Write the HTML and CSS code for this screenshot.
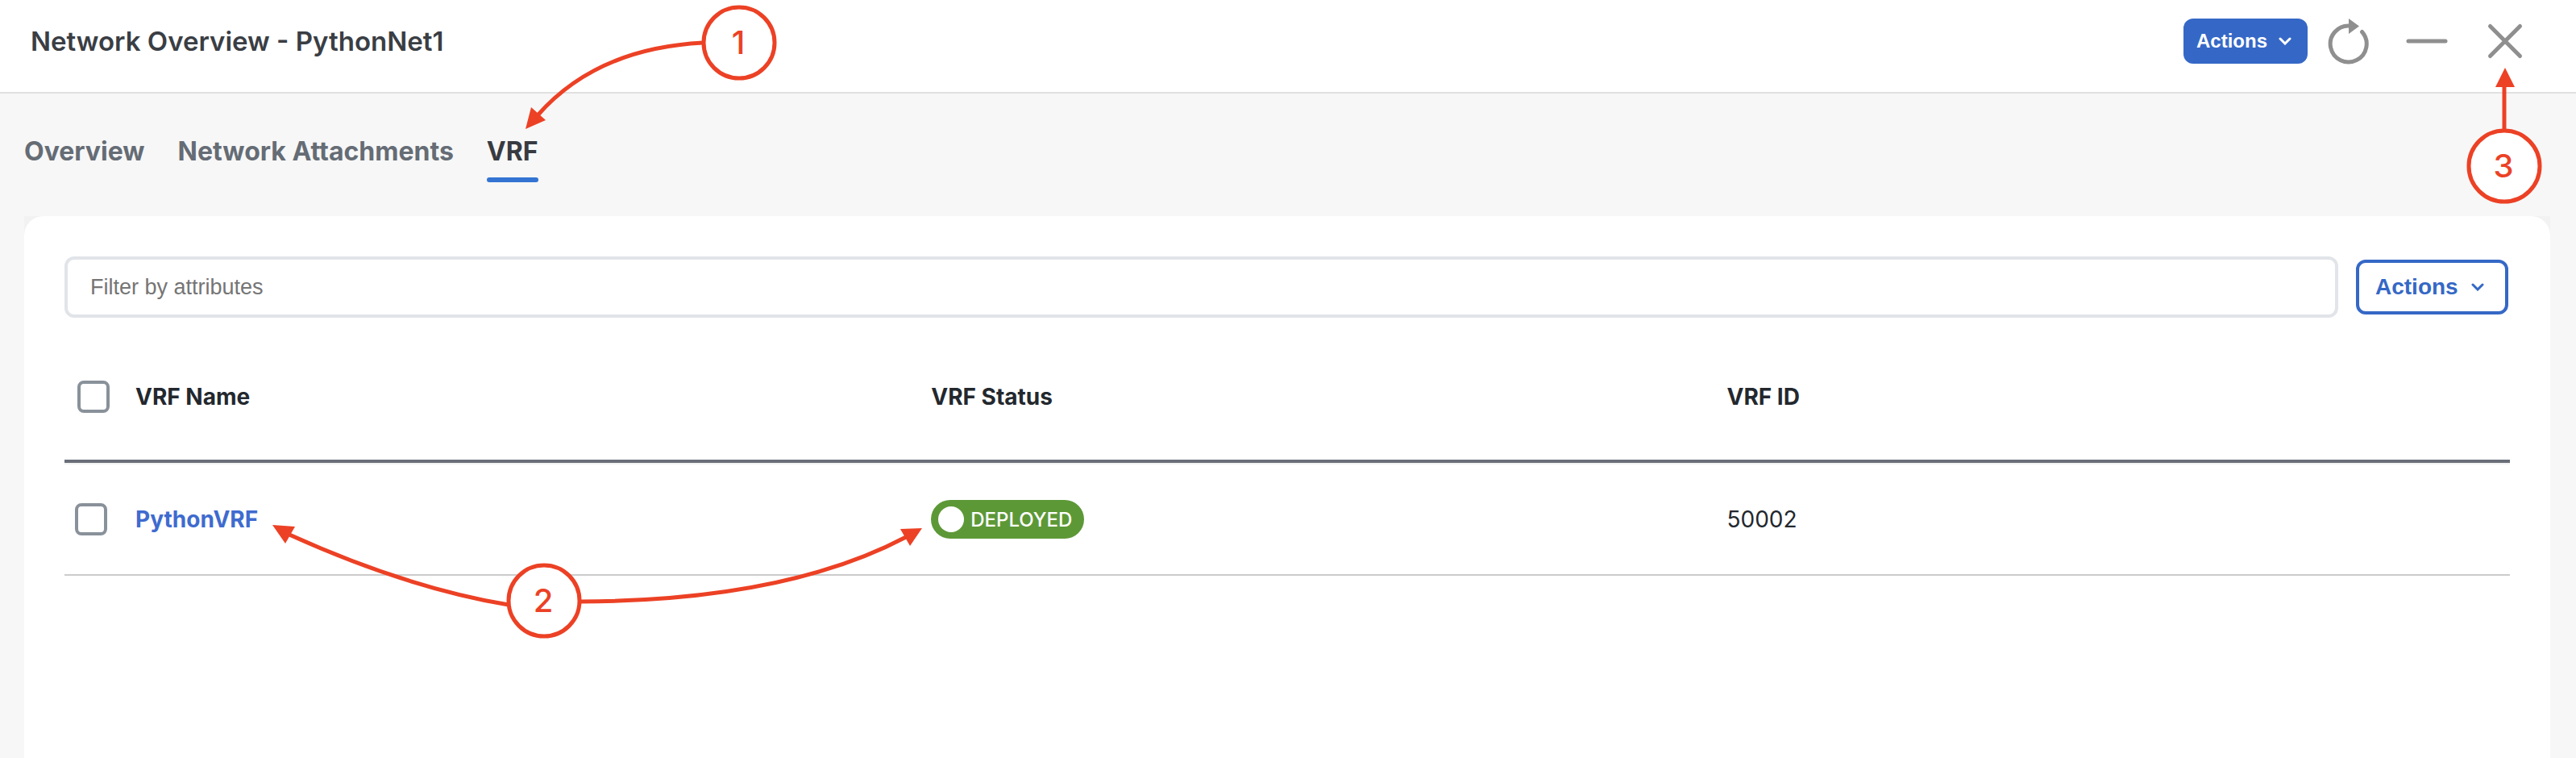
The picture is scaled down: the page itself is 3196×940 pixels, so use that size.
FILE: index.html
```html
<!DOCTYPE html>
<html lang="en">
<head>
    <meta charset="UTF-8">
    <meta name="viewport" content="width=device-width, initial-scale=1.0">
    <title>Network Overview - PythonNet1</title>
    <link rel="stylesheet" href="styles.css">
</head>
<body>
    <header class="header">
        <h1>Network Overview - PythonNet1</h1>
        <div class="header-tools">
            <button type="button" class="btn btn-primary">Actions
                <svg class="chevron" width="16" height="10" viewBox="0 0 16 10"><path d="M2 2l6 6 6-6"/></svg>
            </button>
            <button type="button" class="icon-btn" aria-label="Refresh">
                <svg width="60" height="60" viewBox="0 0 60 60">
                    <path class="line" d="M31 11A22.500 22.500 0 1 0 46.500 18.500"/>
                    <path class="solid" d="M30 2l13 9.500-13 9.500z"/>
                </svg>
            </button>
            <button type="button" class="icon-btn" aria-label="Minimize">
                <svg width="60" height="60" viewBox="0 0 60 60"><path class="line" d="M7 30h46"/></svg>
            </button>
            <button type="button" class="icon-btn" aria-label="Close">
                <svg width="60" height="60" viewBox="0 0 60 60"><path class="line" d="M11.500 11.500l37 37M48.500 11.500l-37 37"/></svg>
            </button>
        </div>
    </header>

    <nav class="tabs">
        <a href="#overview">Overview</a>
        <a href="#attachments">Network Attachments</a>
        <a href="#vrf" class="active">VRF</a>
    </nav>

    <main class="content">
        <div class="card">
            <div class="toolbar">
                <input type="text" class="filter" placeholder="Filter by attributes" aria-label="Filter by attributes">
                <button type="button" class="btn btn-outline">Actions
                    <svg class="chevron" width="16" height="10" viewBox="0 0 16 10"><path d="M2 2l6 6 6-6"/></svg>
                </button>
            </div>

            <table class="vrf-table">
                <thead>
                    <tr>
                        <th class="col-check"><input type="checkbox" aria-label="Select all"></th>
                        <th class="col-data">VRF Name</th>
                        <th class="col-data">VRF Status</th>
                        <th>VRF ID</th>
                    </tr>
                </thead>
                <tbody>
                    <tr>
                        <td><input type="checkbox" aria-label="Select PythonVRF"></td>
                        <td><a href="#PythonVRF">PythonVRF</a></td>
                        <td><span class="status"><span class="dot"></span>DEPLOYED</span></td>
                        <td>50002</td>
                    </tr>
                </tbody>
            </table>
        </div>
    </main>

    <!-- callouts -->
    <svg class="callouts callouts-left" width="1200" height="820" viewBox="0 0 1200 820">
        <path class="arrow" d="M872 53Q740 60 667 143"/>
        <path class="head" d="M652 160L659 133L677 149Z"/>
        <circle cx="917" cy="53" r="44"/>
        <text x="916" y="67">1</text>

        <path class="arrow" d="M631 750Q505 729 359 663"/>
        <path class="arrow" d="M720 746Q974 745 1124 666"/>
        <path class="head" d="M338 651L366 653L354 674Z"/>
        <path class="head" d="M1144 655L1117 656L1129 677Z"/>
        <circle cx="675" cy="745" r="44"/>
        <text x="674" y="759">2</text>
    </svg>
    <svg class="callouts callouts-right" width="120" height="260" viewBox="0 0 120 260">
        <path class="arrow" d="M61 162V106"/>
        <path class="head" d="M62 84L50 108H74Z"/>
        <circle cx="61" cy="206" r="44"/>
        <text x="60" y="220">3</text>
    </svg>
</body>
</html>
```

FILE: styles.css
```css
* {
    box-sizing: border-box;
}

body {
    position: relative;
    display: flex;
    flex-direction: column;
    min-height: 100vh;
    margin: 0;
    background-color: #f7f7f7;
    color: #23282e;
    font-family: "Inter", "Liberation Sans", sans-serif;
    font-size: 28px;
}

/* header */
.header {
    display: flex;
    align-items: center;
    justify-content: space-between;
    height: 116px;
    padding: 0 58px 12px 38px;
    background-color: #ffffff;
    border-bottom: 2px solid #e0e0e0;
}

h1 {
    margin: 0;
    color: #3a3e44;
    font-size: 33px;
    font-weight: 600;
}

.header-tools {
    display: flex;
    align-items: center;
    gap: 37px;
}

.btn {
    display: flex;
    align-items: center;
    justify-content: space-between;
    border-radius: 12px;
    font-family: "Liberation Sans", sans-serif;
    font-weight: bold;
    cursor: pointer;
}

.btn-primary {
    width: 154px;
    height: 56px;
    margin-right: -16px;
    padding: 0 20px 0 16px;
    border: none;
    background-color: #3568c6;
    color: #ffffff;
    font-size: 24px;
}

.btn-outline {
    width: 189px;
    height: 68px;
    padding: 0 26px 0 20px;
    border: 4px solid #3568c6;
    background-color: #ffffff;
    color: #3568c6;
    font-size: 28px;
}

.chevron path {
    fill: none;
    stroke: currentColor;
    stroke-width: 3;
    stroke-linecap: round;
}

.icon-btn {
    width: 60px;
    height: 60px;
    padding: 0;
    border: none;
    background: none;
    cursor: pointer;
}

.icon-btn svg {
    display: block;
}

.icon-btn .line {
    fill: none;
    stroke: #8f8f8f;
    stroke-width: 5;
    stroke-linecap: round;
}

.icon-btn .solid {
    fill: #8f8f8f;
}

/* tabs */
.tabs {
    display: flex;
    gap: 41px;
    padding: 52px 30px 42px;
    font-size: 32px;
    font-weight: 700;
    line-height: 40px;
}

.tabs a {
    position: relative;
    padding-bottom: 18px;
    color: #656c75;
    text-decoration: none;
}

.tabs .active {
    color: #373b41;
}

.tabs .active::after {
    content: "";
    position: absolute;
    left: 0;
    right: 0;
    bottom: 0;
    height: 6px;
    border-radius: 3px;
    background-color: #3374d3;
}

/* card */
.content {
    display: flex;
    flex: 1;
    margin: 0 32px 0 30px;
    background-color: #f2f2f2;
}

.card {
    flex: 1;
    padding: 50px 50px 0;
    border-radius: 24px 24px 0 0;
    background-color: #ffffff;
}

.toolbar {
    display: flex;
    align-items: center;
    gap: 22px;
    margin: 0 2px 20px 0;
}

.filter {
    flex: 1;
    height: 76px;
    padding: 0 28px;
    border: 4px solid #e1e4e8;
    border-radius: 12px;
    background-color: #ffffff;
    font-family: "Liberation Sans", sans-serif;
    font-size: 27px;
}

.filter::placeholder {
    color: #757575;
}

/* table */
.vrf-table {
    width: 100%;
    table-layout: fixed;
    border-spacing: 0;
}

.vrf-table th,
.vrf-table td {
    padding: 0;
    text-align: left;
    vertical-align: middle;
}

.vrf-table th {
    height: 160px;
    border-bottom: 4px solid #696e79;
    font-weight: 700;
}

.vrf-table td {
    height: 140px;
    border-top: 2px solid #f2f2f2;
    border-bottom: 2px solid #cccccc;
}

.col-check {
    width: 88px;
}

.col-data {
    width: 32.54%;
}

.vrf-table a {
    color: #3f6bcf;
    font-weight: 700;
    text-decoration: none;
}

input[type="checkbox"] {
    display: block;
    appearance: none;
    width: 40px;
    height: 40px;
    margin: 0 0 0 13px;
    border: 4px solid #89919a;
    border-radius: 8px;
    background-color: #ffffff;
}

th input[type="checkbox"] {
    margin-left: 16px;
}

.status {
    display: inline-flex;
    align-items: center;
    gap: 8px;
    height: 48px;
    padding: 0 15px 0 9px;
    border-radius: 24px;
    background-color: #5d9837;
    color: #ffffff;
    font-size: 24px;
    font-weight: 500;
    vertical-align: middle;
}

.dot {
    width: 32px;
    height: 32px;
    border-radius: 50%;
    background-color: #ffffff;
}

/* callouts */
.callouts {
    position: absolute;
    top: 0;
    pointer-events: none;
}

.callouts-left {
    left: 0;
}

.callouts-right {
    right: 30px;
}

.callouts circle {
    fill: #ffffff;
    stroke: #ec4125;
    stroke-width: 5;
}

.callouts .arrow {
    fill: none;
    stroke: #ec4125;
    stroke-width: 5;
}

.callouts .head {
    fill: #ec4125;
}

.callouts text {
    fill: #ec4125;
    font-size: 40px;
    font-weight: 500;
    text-anchor: middle;
}
```
